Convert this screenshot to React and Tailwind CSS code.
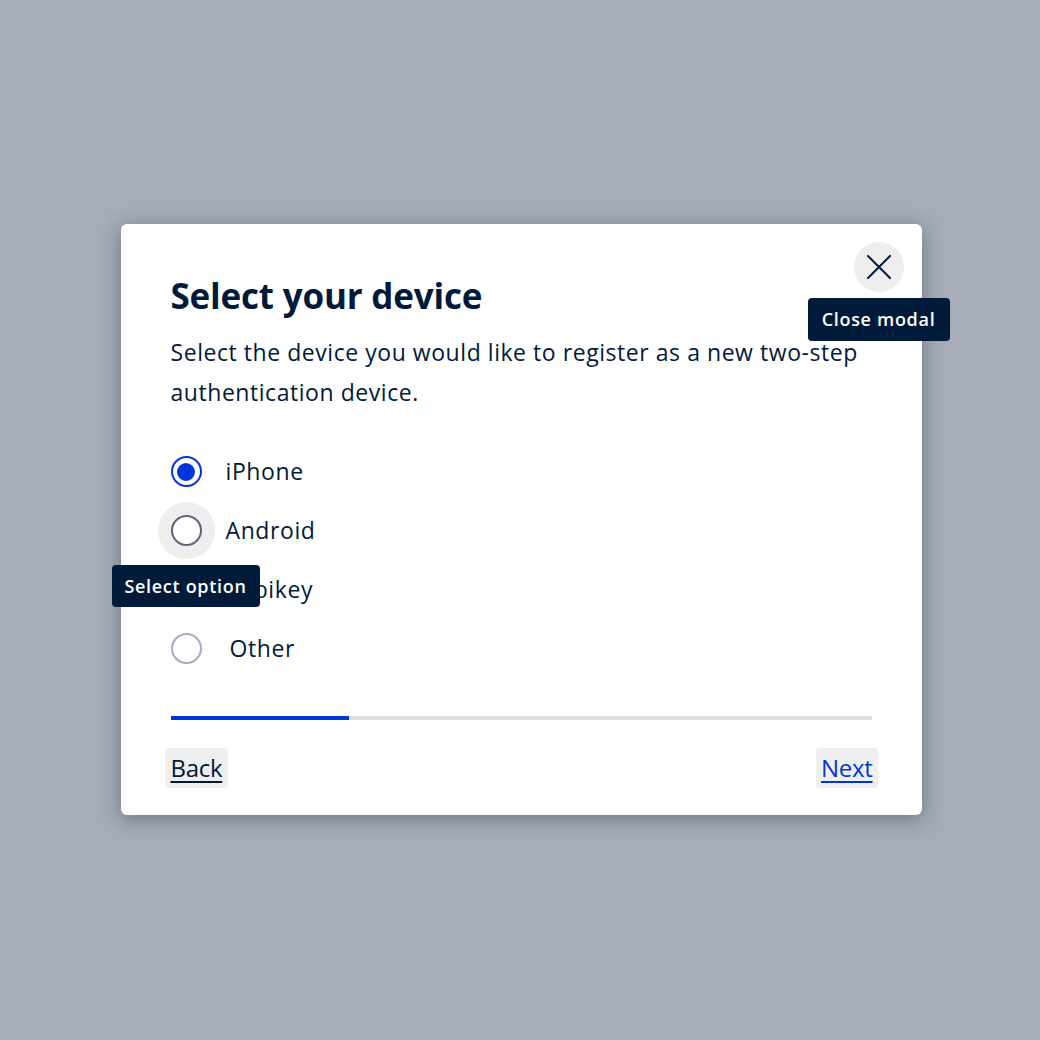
import { useState } from "react";

const options = [
  { id: "iphone", label: "iPhone" },
  { id: "android", label: "Android", hover: true },
  { id: "yubikey", label: "Yubikey" },
  { id: "other", label: "Other", offset: true },
];

function Radio({ checked, hover }) {
  return (
    <span className="relative flex h-[31px] w-[31px] items-center justify-center rounded-full">
      {hover && <span className="absolute -inset-[13px] rounded-full bg-[#eeeeee]" />}
      <span
        className={`relative flex h-[31px] w-[31px] items-center justify-center rounded-full border-2 bg-white ${
          checked ? "border-[#0036d9]" : hover ? "border-[#5b6577]" : "border-[#a3adbd]"
        }`}
      >
        {checked && <span className="h-[18px] w-[18px] rounded-full bg-[#0036d9]" />}
      </span>
    </span>
  );
}

export default function App() {
  const [selected, setSelected] = useState("iphone");

  return (
    <div
      className="flex h-[1040px] w-[1040px] items-start justify-center bg-[#a6acb8] pl-[2px] pt-[224px] text-[#001a3a]"
      style={{ fontFamily: "'Open Sans', 'Noto Sans', sans-serif" }}
    >
      <div className="relative w-[801px] rounded-[6px] bg-white px-[50px] pb-[27px] pt-[48px] shadow-[0_4px_20px_rgba(40,48,64,0.45)]">
        <button className="absolute right-[18px] top-[18px] flex h-[50px] w-[50px] items-center justify-center rounded-full bg-[#eeeeee]">
          <svg width="24" height="24" viewBox="0 0 24 24" fill="none" stroke="#001a3a" strokeWidth="2" strokeLinecap="round">
            <path d="M1 1L23 23M23 1L1 23" />
          </svg>
        </button>
        <div className="absolute left-[687px] top-[74px] z-10 flex h-[43px] w-[142px] items-center justify-center rounded-[4px] bg-[#001a3a] text-[18px] font-semibold tracking-[0.7px] text-white">
          Close modal
        </div>

        <h2 className="text-[35px] font-bold leading-[48px] tracking-[-0.2px]">Select your device</h2>
        <p className="mt-[12px] text-[23px] leading-[40px] tracking-[0.55px]">
          Select the device you would like to register as a new two-step authentication device.
        </p>

        <div className="mt-[30px] flex flex-col">
          {options.map((o) => (
            <label
              key={o.id}
              className="relative flex h-[59px] cursor-pointer items-center"
              onClick={() => setSelected(o.id)}
            >
              <Radio checked={selected === o.id} hover={o.hover} />
              <span className={`text-[23px] tracking-[0.6px] ${o.offset ? "ml-[28px]" : "ml-[24px]"}`}>{o.label}</span>
              {o.id === "yubikey" && (
                <span className="absolute left-[-59px] top-[5px] z-10 flex h-[42px] w-[148px] items-center justify-center rounded-[4px] bg-[#001a3a] text-[18px] font-semibold tracking-[0.7px] text-white">
                  Select option
                </span>
              )}
            </label>
          ))}
        </div>

        <div className="mt-[38px] h-[4px] w-full bg-[#dcdee2]">
          <div className="h-full w-[178px] bg-[#0036d9]" />
        </div>

        <div className="-mx-[6px] mt-[28px] flex items-center justify-between">
          <button className="flex h-[40px] items-center rounded-[4px] bg-[#efefef] px-[6px] text-[24px] tracking-[-0.3px] text-[#001a3a] underline underline-offset-[4px]">
            Back
          </button>
          <button className="flex h-[40px] items-center rounded-[4px] bg-[#efefef] px-[5px] text-[24px] tracking-[-0.3px] text-[#0036d9] underline underline-offset-[4px]">
            Next
          </button>
        </div>
      </div>
    </div>
  );
}
